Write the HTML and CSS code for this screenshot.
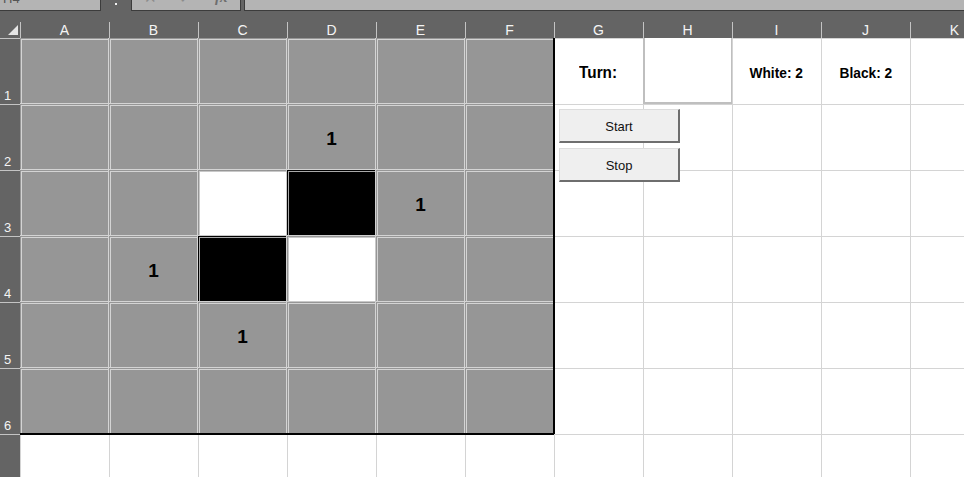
FILE: index.html
```html
<!DOCTYPE html>
<html>
<head>
<meta charset="utf-8">
<link rel="stylesheet" href="styles.css">
</head>
<body>
<div class="bar">
  <div class="namebox"><span class="nb-text">H4</span></div>
  <div class="dot"></div>
  <div class="fxbox"><span class="ic ic-x">✕</span><span class="ic ic-ok">✓</span><span class="ic ic-fx">fx</span></div>
  <div class="formula"></div>
</div>
<div class="sheet">
  <div class="corner"><svg width="20" height="26" viewBox="0 0 20 26"><polygon points="8,23 18,23 18,13" fill="#e6e6e6"/></svg></div>
  <div class="ch">A</div><div class="ch">B</div><div class="ch">C</div><div class="ch">D</div><div class="ch">E</div><div class="ch">F</div><div class="ch">G</div><div class="ch">H</div><div class="ch">I</div><div class="ch">J</div><div class="ch">K</div>

  <div class="rh">1</div>
  <div class="g"></div><div class="g"></div><div class="g"></div><div class="g"></div><div class="g"></div><div class="g r"></div>
  <div class="w l lbl"><span class="turn">Turn:</span></div>
  <div class="hbox"></div>
  <div class="w lbl"><span class="score">White: 2</span></div>
  <div class="w lbl"><span class="score">Black: 2</span></div>
  <div class="w"></div>

  <div class="rh">2</div>
  <div class="g"></div><div class="g"></div><div class="g"></div><div class="g n">1</div><div class="g"></div><div class="g r"></div>
  <div class="w l"></div><div class="w"></div><div class="w"></div><div class="w"></div><div class="w"></div>

  <div class="rh">3</div>
  <div class="g"></div><div class="g"></div><div class="pw"></div><div class="pb"></div><div class="g n">1</div><div class="g r"></div>
  <div class="w l"></div><div class="w"></div><div class="w"></div><div class="w"></div><div class="w"></div>

  <div class="rh">4</div>
  <div class="g"></div><div class="g n">1</div><div class="pb"></div><div class="pw"></div><div class="g"></div><div class="g r"></div>
  <div class="w l"></div><div class="w"></div><div class="w"></div><div class="w"></div><div class="w"></div>

  <div class="rh">5</div>
  <div class="g"></div><div class="g"></div><div class="g n">1</div><div class="g"></div><div class="g"></div><div class="g r"></div>
  <div class="w l"></div><div class="w"></div><div class="w"></div><div class="w"></div><div class="w"></div>

  <div class="rh">6</div>
  <div class="g b"></div><div class="g b"></div><div class="g b"></div><div class="g b"></div><div class="g b"></div><div class="g rb"></div>
  <div class="w l"></div><div class="w"></div><div class="w"></div><div class="w"></div><div class="w"></div>

  <div class="rh"></div>
  <div class="w t"></div><div class="w t"></div><div class="w t"></div><div class="w t"></div><div class="w t"></div><div class="w t"></div>
  <div class="w"></div><div class="w"></div><div class="w"></div><div class="w"></div><div class="w"></div>
</div>
<div class="btns">
  <button class="btn"><span class="btxt">Start</span></button>
  <button class="btn"><span class="btxt">Stop</span></button>
</div>
</body>
</html>
```
FILE: styles.css
```css
html, body {
  margin: 0;
  padding: 0;
}
body {
  width: 964px;
  height: 477px;
  overflow: hidden;
  position: relative;
  background: #fff;
  font-family: "Liberation Sans", Arial, sans-serif;
}

/* top formula strip */
.bar {
  display: flex;
  height: 12px;
  background: #646464;
  overflow: hidden;
}
.namebox {
  width: 101px;
  height: 11px;
  background: #b4b4b4;
  border-right: 1px solid #3c3c3c;
  border-bottom: 1px solid #3c3c3c;
  box-sizing: border-box;
  overflow: hidden;
  padding-left: 3px;
}
.nb-text {
  display: block;
  font-size: 13px;
  line-height: 13px;
  margin-top: -8px;
  color: #555;
}
.dot {
  width: 2px;
  height: 2px;
  margin: 3px 0 0 14px;
  background: #f2f2f2;
}
.fxbox {
  margin-left: 14px;
  width: 110px;
  height: 11px;
  box-sizing: border-box;
  background: #b4b4b4;
  border: 1px solid #3c3c3c;
  border-top: 0;
  overflow: hidden;
  display: flex;
}
.ic {
  display: block;
  color: #8c8c8c;
  font-size: 15px;
  line-height: 15px;
  margin-top: -10px;
}
.ic-x { margin-left: 12px; }
.ic-ok { margin-left: 22px; }
.ic-fx { margin-left: 23px; font-style: italic; font-family: "Liberation Serif", serif; font-weight: bold; color: #6e6e6e; }
.formula {
  margin-left: 3px;
  flex: 1;
  height: 11px;
  box-sizing: border-box;
  background: #b4b4b4;
  border-left: 1px solid #3c3c3c;
  border-bottom: 1px solid #3c3c3c;
}

/* sheet grid */
.sheet {
  display: grid;
  grid-template-columns: 20px repeat(11, 89px);
  grid-template-rows: 26px repeat(6, 66px) 43px;
}
.corner {
  background: #646464;
}
.corner svg { display: block; }
.ch {
  background: linear-gradient(#c4c4c4, #c4c4c4) 0 100% / 1px 16px no-repeat, #646464;
  color: #f4f4f4;
  font-size: 14px;
  line-height: 14px;
  text-align: center;
  padding-top: 11px;
  box-sizing: border-box;
}
.rh {
  background: #646464;
  box-shadow: inset 0 1px 0 #c4c4c4;
  color: #f4f4f4;
  font-size: 13px;
  line-height: 13px;
  display: flex;
  align-items: flex-end;
  padding: 0 0 2px 4px;
  box-sizing: border-box;
}

/* board cells */
.g {
  background: #969696;
  box-shadow: inset -1px -1px 0 #d4d4d4, inset 1px 1px 0 #969696, inset 2px 2px 0 #d4d4d4;
}
.g.r {
  box-shadow: inset -1px 0 0 #000, inset 0 -1px 0 #d4d4d4, inset 1px 1px 0 #969696, inset 2px 2px 0 #d4d4d4;
}
.g.b {
  box-shadow: inset 0 -1px 0 #000, inset -1px 0 0 #d4d4d4, inset 1px 1px 0 #969696, inset 2px 2px 0 #d4d4d4;
}
.g.rb {
  box-shadow: inset -1px -1px 0 #000, inset 1px 1px 0 #969696, inset 2px 2px 0 #d4d4d4;
}
.n {
  display: flex;
  align-items: center;
  justify-content: center;
  font-weight: bold;
  font-size: 19px;
  padding-top: 4px;
  box-sizing: border-box;
  color: #000;
}
.pw {
  background: #fff;
  box-shadow: inset -1px -1px 0 #c8c8c8, inset 1px 1px 0 #969696, inset 2px 2px 0 #c8c8c8;
}
.pb {
  background: #000;
  box-shadow: inset -1px -1px 0 #d0d0d0, inset 1px 1px 0 #000, inset 2px 2px 0 #a8a8a8;
}

/* plain cells */
.w {
  background: #fff;
  box-shadow: inset 1px 1px 0 #d4d4d4;
}
.w.l {
  box-shadow: inset 1px 0 0 #000, inset 0 1px 0 #d4d4d4;
}
.w.t {
  box-shadow: inset 0 1px 0 #000, inset 1px 0 0 #d4d4d4;
}
.hbox {
  background: #fff;
  box-shadow: inset 2px 0 0 #bfbfbf, inset -1px 0 0 #bfbfbf, inset 0 -2px 0 #bfbfbf;
}
.lbl {
  display: flex;
  align-items: center;
  justify-content: center;
  color: #000;
  font-weight: bold;
}
.turn {
  display: inline-block;
  font-size: 17px;
  transform: scaleX(0.9);
  margin-top: 3px;
}
.score {
  display: inline-block;
  font-size: 14px;
  transform: scaleX(0.98);
  margin-top: 4px;
}

/* buttons overlaying cells */
.btns {
  position: absolute;
  left: 559px;
  top: 109px;
  display: flex;
  flex-direction: column;
  gap: 5px;
}
.btn {
  width: 121px;
  height: 34px;
  box-sizing: border-box;
  margin: 0;
  padding: 0;
  background: #efefef;
  border-style: solid;
  border-width: 1px 2px 2px 1px;
  border-color: #dcdcdc #6e6e6e #6e6e6e #dcdcdc;
  font-family: "Liberation Sans", Arial, sans-serif;
  font-size: 13px;
  color: #111;
  display: flex;
  align-items: center;
  justify-content: center;
}
.btxt {
  display: inline-block;
  margin-top: 1px;
}
```
